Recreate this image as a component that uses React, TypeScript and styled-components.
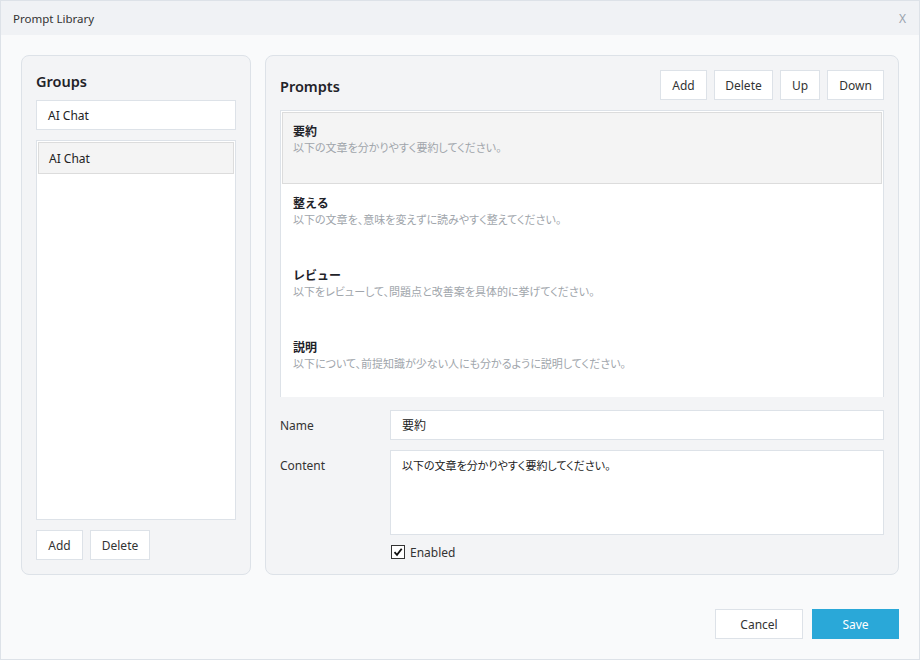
import React, { useState } from "react";
import styled, { createGlobalStyle } from "styled-components";

const GlobalStyle = createGlobalStyle`
  html, body {
    margin: 0;
    padding: 0;
    background: #ffffff;
  }
  body {
    font-family: "Noto Sans", "Noto Sans CJK JP", sans-serif;
    font-size: 12px;
    color: #222;
  }
`;

const Window = styled.div`
  width: 920px;
  height: 660px;
  box-sizing: border-box;
  border: 1px solid #dde2e8;
  background: #f9fafb;
  display: flex;
  flex-direction: column;
`;

const TitleBar = styled.div`
  height: 34px;
  background: #f0f2f5;
  display: flex;
  align-items: center;
  justify-content: space-between;
  padding: 0 12px;
  font-size: 11.5px;
  color: #333;
`;

const CloseX = styled.span`
  color: #9aa3ad;
  font-size: 12px;
  margin-right: 1px;
`;

const Body = styled.div`
  flex: 1;
  display: flex;
  flex-direction: column;
  padding: 20px;
`;

const Panels = styled.div`
  display: flex;
  gap: 14px;
`;

const Panel = styled.div<{ $width: number }>`
  width: ${(p) => p.$width}px;
  height: 520px;
  box-sizing: border-box;
  border: 1px solid #dde2e8;
  border-radius: 8px;
  background: #f3f4f6;
  padding: 14px;
  display: flex;
  flex-direction: column;
  & > * {
    flex-shrink: 0;
  }
`;

const Heading = styled.div<{ $gap?: number }>`
  font-size: 14.5px;
  font-weight: 600;
  color: #1f2329;
  line-height: 20px;
  margin-top: 1px;
  margin-bottom: ${(p) => p.$gap ?? 0}px;
`;

const TextInput = styled.div`
  height: 30px;
  box-sizing: border-box;
  border: 1px solid #dde2e8;
  background: #fff;
  display: flex;
  align-items: center;
  padding: 0 11px;
  font-size: 12px;
  color: #222;
`;

const GroupList = styled.div`
  flex: 1 1 auto;
  margin-top: 10px;
  border: 1px solid #dde2e8;
  background: #fff;
  padding: 1px;
`;

const GroupItem = styled.div<{ $selected?: boolean }>`
  height: 32px;
  box-sizing: border-box;
  display: flex;
  align-items: center;
  padding: 0 10px;
  background: ${(p) => (p.$selected ? "#f4f4f4" : "#fff")};
  border: 1px solid ${(p) => (p.$selected ? "#dcdcdc" : "transparent")};
`;

const ButtonRow = styled.div<{ $top?: number }>`
  display: flex;
  gap: 7px;
  margin-top: ${(p) => p.$top ?? 10}px;
`;

const Button = styled.button<{ $width: number; $primary?: boolean }>`
  width: ${(p) => p.$width}px;
  height: 30px;
  box-sizing: border-box;
  border: 1px solid ${(p) => (p.$primary ? "#2aa8d8" : "#dde2e8")};
  background: ${(p) => (p.$primary ? "#2aa8d8" : "#fff")};
  color: ${(p) => (p.$primary ? "#fff" : "#333")};
  font-family: "Noto Sans", "Noto Sans CJK JP", sans-serif;
  font-size: 12px;
  padding: 0;
  cursor: pointer;
`;

const PromptsHeader = styled.div`
  display: flex;
  align-items: center;
  justify-content: space-between;
  height: 30px;
`;

const PromptList = styled.div`
  margin-top: 10px;
  height: 287px;
  box-sizing: border-box;
  overflow: hidden;
  border: 1px solid #dde2e8;
  border-bottom: none;
  background: #fff;
  padding: 1px 1px 0 1px;
`;

const PromptItem = styled.div<{ $selected?: boolean }>`
  height: 72px;
  box-sizing: border-box;
  padding: 10px 10px;
  background: ${(p) => (p.$selected ? "#f4f4f4" : "#fff")};
  border: 1px solid ${(p) => (p.$selected ? "#dcdcdc" : "transparent")};
`;

const PromptTitle = styled.div`
  font-size: 12px;
  font-weight: 700;
  color: #1f2329;
  line-height: 17px;
`;

const PromptDesc = styled.div`
  font-size: 11px;
  font-feature-settings: "palt";
  color: #a0a5ab;
  line-height: 16px;
`;

const Form = styled.div`
  display: grid;
  grid-template-columns: 110px 1fr;
  row-gap: 10px;
  margin-top: 13px;
`;

const Label = styled.div`
  font-size: 12px;
  color: #333;
  padding-top: 7px;
`;

const TextArea = styled.div`
  height: 85px;
  box-sizing: border-box;
  border: 1px solid #dde2e8;
  background: #fff;
  padding: 6px 11px;
  font-size: 11px;
  font-feature-settings: "palt";
  color: #222;
`;

const CheckRow = styled.label`
  grid-column: 2;
  display: flex;
  align-items: center;
  gap: 5px;
  height: 14px;
  font-size: 12px;
  color: #333;
`;

const Box = styled.span`
  width: 12px;
  height: 12px;
  border: 1px solid #333;
  background: #fff;
  display: flex;
  align-items: center;
  justify-content: center;
  margin-left: 1px;
`;

const Footer = styled.div`
  margin-top: auto;
  display: flex;
  justify-content: flex-end;
  gap: 9px;
`;

const prompts = [
  { title: "要約", desc: "以下の文章を分かりやすく要約してください。" },
  { title: "整える", desc: "以下の文章を、意味を変えずに読みやすく整えてください。" },
  { title: "レビュー", desc: "以下をレビューして、問題点と改善案を具体的に挙げてください。" },
  { title: "説明", desc: "以下について、前提知識が少ない人にも分かるように説明してください。" },
];

export default function App() {
  const [selected, setSelected] = useState(0);
  const [enabled, setEnabled] = useState(true);
  const current = prompts[selected];

  return (
    <>
      <GlobalStyle />
      <Window>
        <TitleBar>
          <span>Prompt Library</span>
          <CloseX>X</CloseX>
        </TitleBar>
        <Body>
          <Panels>
            <Panel $width={230}>
              <Heading $gap={9}>Groups</Heading>
              <TextInput>AI Chat</TextInput>
              <GroupList>
                <GroupItem $selected>AI Chat</GroupItem>
              </GroupList>
              <ButtonRow>
                <Button $width={47}>Add</Button>
                <Button $width={60}>Delete</Button>
              </ButtonRow>
            </Panel>
            <Panel $width={634}>
              <PromptsHeader>
                <Heading>Prompts</Heading>
                <ButtonRow $top={0}>
                  <Button $width={47}>Add</Button>
                  <Button $width={59}>Delete</Button>
                  <Button $width={40}>Up</Button>
                  <Button $width={57}>Down</Button>
                </ButtonRow>
              </PromptsHeader>
              <PromptList>
                {prompts.map((p, i) => (
                  <PromptItem key={p.title} $selected={i === selected} onClick={() => setSelected(i)}>
                    <PromptTitle>{p.title}</PromptTitle>
                    <PromptDesc>{p.desc}</PromptDesc>
                  </PromptItem>
                ))}
              </PromptList>
              <Form>
                <Label>Name</Label>
                <TextInput>{current.title}</TextInput>
                <Label>Content</Label>
                <TextArea>{current.desc}</TextArea>
                <CheckRow onClick={() => setEnabled(!enabled)}>
                  <Box>
                    {enabled && (
                      <svg width="10" height="10" viewBox="0 0 10 10">
                        <path d="M1.5 5.2 L4 7.8 L8.7 1.8" fill="none" stroke="#111" strokeWidth="1.8" />
                      </svg>
                    )}
                  </Box>
                  Enabled
                </CheckRow>
              </Form>
            </Panel>
          </Panels>
          <Footer>
            <Button $width={88}>Cancel</Button>
            <Button $width={87} $primary>
              Save
            </Button>
          </Footer>
        </Body>
      </Window>
    </>
  );
}
